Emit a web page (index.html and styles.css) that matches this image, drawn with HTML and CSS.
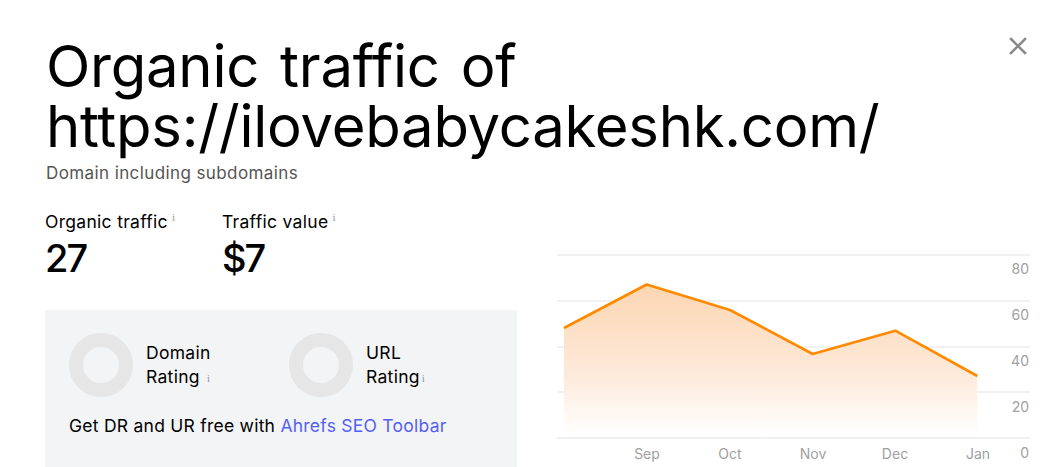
FILE: index.html
```html
<!DOCTYPE html>
<html>
<head>
<meta charset="utf-8">
<link rel="stylesheet" href="styles.css">
</head>
<body>
<div class="modal">
  <button class="close" aria-label="Close">
    <svg width="18" height="18" viewBox="0 0 18 18"><path d="M2 2 L16 16 M16 2 L2 16" stroke="#8a8a8a" stroke-width="2.6" stroke-linecap="square" fill="none"/></svg>
  </button>
  <h1 class="title">Organic traffic of<br>https://ilovebabycakeshk.com/</h1>
  <div class="sub">Domain including subdomains</div>
  <div class="content">
    <div class="left">
      <div class="metrics">
        <div class="metric">
          <div class="label">Organic traffic<span class="info">i</span></div>
          <div class="value">27</div>
        </div>
        <div class="metric second">
          <div class="label">Traffic value<span class="info">i</span></div>
          <div class="value">$7</div>
        </div>
      </div>
      <div class="ratings">
        <div class="rating-row">
          <div class="rating">
            <div class="donut"></div>
            <div class="rating-label">Domain<br>Rating <span class="info wide">i</span></div>
          </div>
          <div class="rating">
            <div class="donut"></div>
            <div class="rating-label">URL<br>Rating<span class="info">i</span></div>
          </div>
        </div>
        <div class="promo">Get DR and UR free with <a href="#" class="link">Ahrefs SEO Toolbar</a></div>
      </div>
    </div>
    <div class="chart">
      <svg width="511" height="222" viewBox="0 0 511 222">
        <defs>
          <linearGradient id="fill" x1="0" y1="40" x2="0" y2="190" gradientUnits="userSpaceOnUse">
            <stop offset="0" stop-color="#fcd6b2"/>
            <stop offset="0.6" stop-color="#fdeadb"/>
            <stop offset="1" stop-color="#ffffff"/>
          </linearGradient>
        </defs>
        <g stroke="#ededed" stroke-width="1.6">
          <line x1="7" y1="10" x2="480" y2="10"/>
          <line x1="7" y1="56" x2="480" y2="56"/>
          <line x1="7" y1="102" x2="480" y2="102"/>
          <line x1="7" y1="147" x2="480" y2="147"/>
          <line x1="7" y1="193" x2="480" y2="193"/>
        </g>
        <path d="M14 83 L96.7 39.5 L180 65 L262.7 109 L345.3 85.7 L427.3 131 L427.3 191 L14 191 Z" fill="url(#fill)"/>
        <path d="M14 83 L96.7 39.5 L180 65 L262.7 109 L345.3 85.7 L427.3 131" fill="none" stroke="#ff8a00" stroke-width="2.6" stroke-linejoin="round"/>
        <g class="axis" text-anchor="end">
          <text x="479" y="29">80</text>
          <text x="479" y="75">60</text>
          <text x="479" y="121">40</text>
          <text x="479" y="167">20</text>
          <text x="479" y="213">0</text>
        </g>
        <g class="axis" text-anchor="middle">
          <text x="97" y="214">Sep</text>
          <text x="180" y="214">Oct</text>
          <text x="263" y="214">Nov</text>
          <text x="345" y="214">Dec</text>
          <text x="428" y="214">Jan</text>
        </g>
      </svg>
    </div>
  </div>
</div>
</body>
</html>
```
FILE: styles.css
```css
* { box-sizing: border-box; }
html, body { margin: 0; padding: 0; background: #fff; }
body {
  font-family: Inter, "Noto Sans", "Liberation Sans", sans-serif;
  color: #000;
  overflow: hidden;
  height: 467px;
}
.modal {
  position: relative;
  padding: 36px 0 0 46px;
}
.close {
  position: absolute;
  top: 37px;
  right: 34px;
  border: 0;
  background: none;
  padding: 0;
  width: 18px;
  height: 18px;
  cursor: pointer;
}
.close svg { display: block; }
.title {
  margin: 0;
  font-weight: 400;
  font-size: 58px;
  line-height: 60px;
  letter-spacing: -0.25px;
  word-spacing: 5px;
  color: #000;
}
.sub {
  margin-top: 7px;
  font-size: 17px;
  line-height: 20px;
  letter-spacing: 0.4px;
  color: #555;
}
.content {
  display: flex;
  margin-top: 12px;
}
.left {
  width: 472px;
  flex: none;
  margin-left: -1px;
}
.metrics {
  display: flex;
  padding-top: 16px;
}
.metric { width: 177px; }
.label {
  font-size: 17.5px;
  line-height: 22px;
  letter-spacing: 0.3px;
}
.info {
  display: inline-block;
  font-size: 11px;
  color: #9a9a9a;
  vertical-align: top;
  margin-left: 4px;
  line-height: 12px;
  letter-spacing: 0;
  font-family: "Liberation Serif", serif;
}
.info.wide { margin-left: 6px; vertical-align: middle; }
.value {
  font-size: 38px;
  line-height: 44px;
  font-weight: 500;
  margin-top: 3px;
  letter-spacing: -2px;
}
.ratings {
  margin-top: 30px;
  background: #f3f4f6;
  height: 170px;
  padding: 23px 0 0 24px;
}
.rating-row {
  display: flex;
}
.rating {
  display: flex;
  align-items: center;
  width: 220px;
}
.donut {
  width: 64px;
  height: 64px;
  border-radius: 50%;
  border: 14px solid #e6e6e6;
  flex: none;
}
.rating-label {
  margin-left: 13px;
  font-size: 17.5px;
  line-height: 24px;
  letter-spacing: 0.3px;
}
.rating-label .info { vertical-align: middle; margin-left: 2px; }
.promo {
  margin-top: 18px;
  font-size: 17.5px;
  line-height: 22px;
  letter-spacing: 0.25px;
}
.link {
  color: #5360f5;
  text-decoration: none;
}
.chart {
  margin-left: 33px;
  margin-top: 50px;
}
.chart svg { display: block; }
.axis {
  font-family: Inter, "Noto Sans", sans-serif;
  font-size: 14px;
  fill: #a0a0a0;
}
```
